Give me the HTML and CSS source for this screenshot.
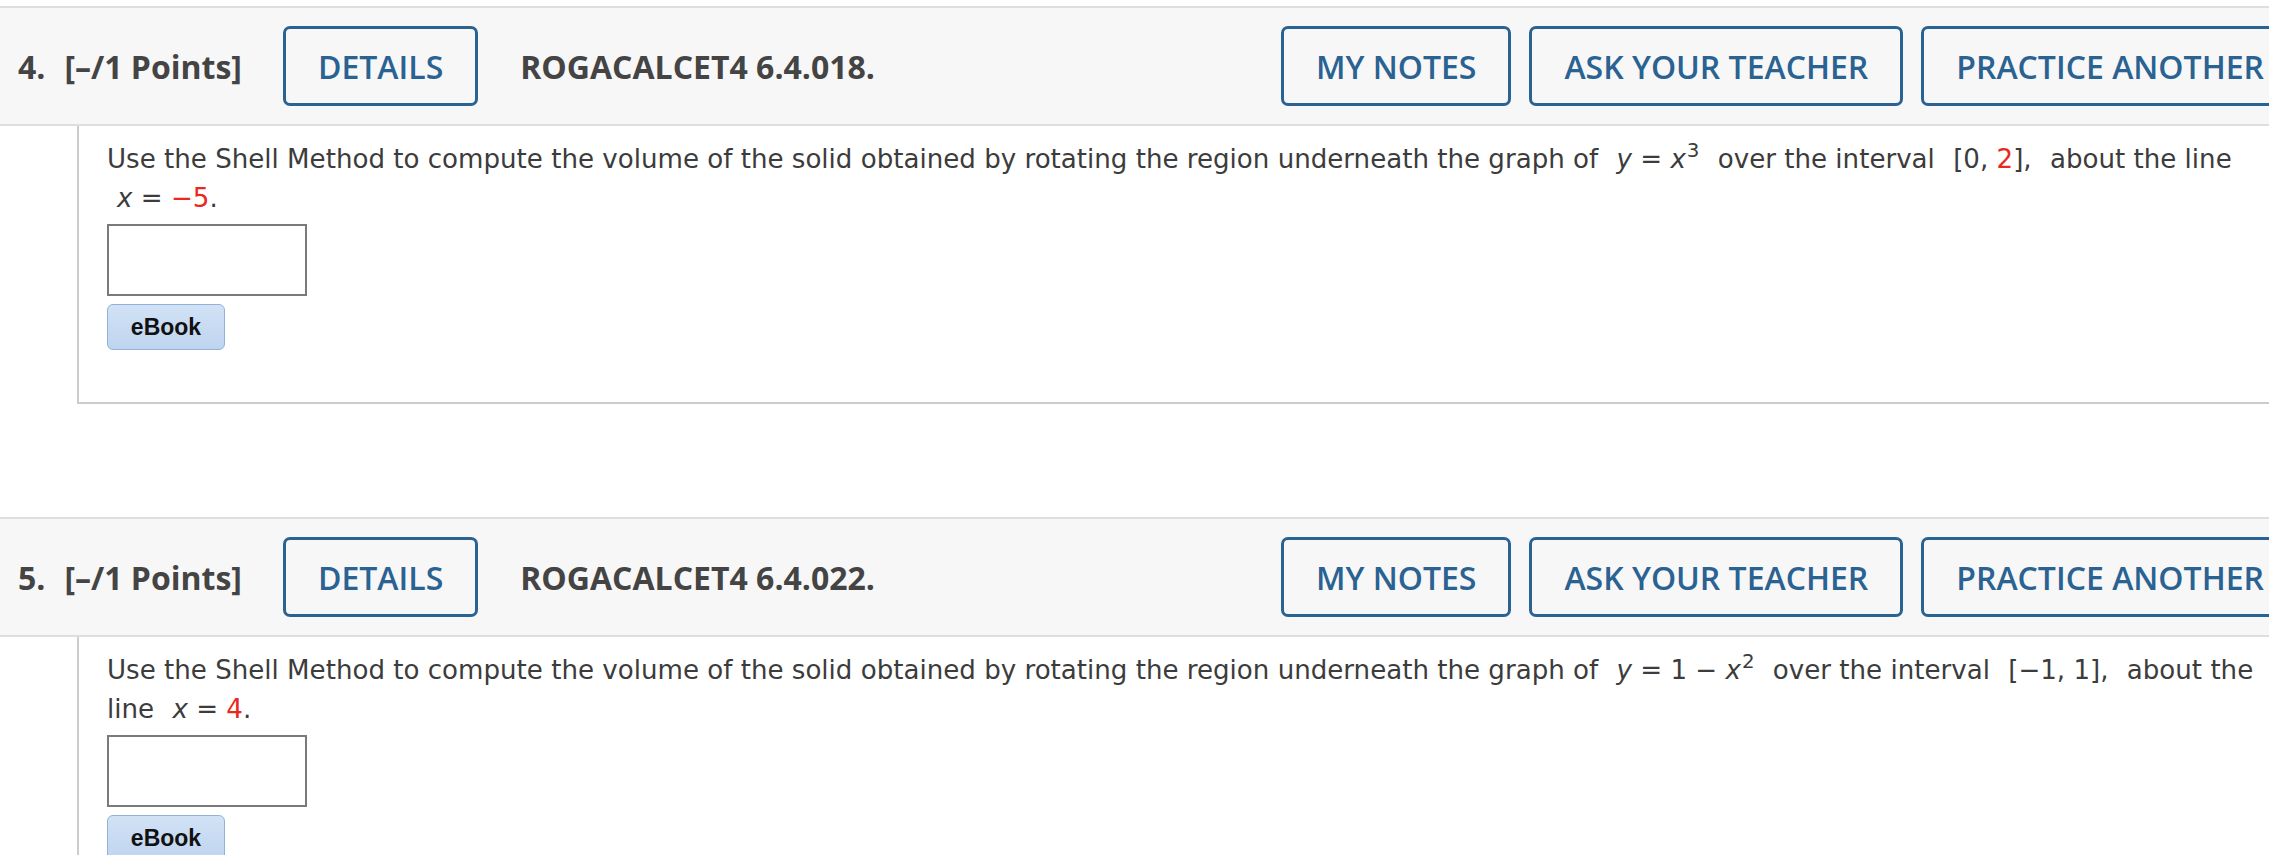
FILE: index.html
```html
<!DOCTYPE html>
<html>
<head>
<meta charset="utf-8">
<link rel="stylesheet" href="styles.css">
</head>
<body>
<div class="page">
  <section class="question first">
    <div class="qhead">
      <div class="qleft">
        <span class="qnum">4.</span>
        <span class="qpts">[–/1 Points]</span>
        <button class="btn">DETAILS</button>
        <span class="qtitle">ROGACALCET4 6.4.018.</span>
      </div>
      <div class="qright">
        <button class="btn">MY NOTES</button>
        <button class="btn">ASK YOUR TEACHER</button>
        <button class="btn">PRACTICE ANOTHER</button>
      </div>
    </div>
    <div class="qbody">
      <p class="qtext">Use the Shell Method to compute the volume of the solid obtained by rotating the region underneath the graph of <span class="math"><i>y</i> = <i>x</i><sup>3</sup></span> over the interval <span class="math">[0, <span class="red">2</span>],</span> about the line <span class="math"><i>x</i> = <span class="red">−5</span>.</span></p>
      <div class="answer"></div>
      <button class="ebook">eBook</button>
    </div>
  </section>

  <section class="question second">
    <div class="qhead">
      <div class="qleft">
        <span class="qnum">5.</span>
        <span class="qpts">[–/1 Points]</span>
        <button class="btn">DETAILS</button>
        <span class="qtitle">ROGACALCET4 6.4.022.</span>
      </div>
      <div class="qright">
        <button class="btn">MY NOTES</button>
        <button class="btn">ASK YOUR TEACHER</button>
        <button class="btn">PRACTICE ANOTHER</button>
      </div>
    </div>
    <div class="qbody">
      <p class="qtext">Use the Shell Method to compute the volume of the solid obtained by rotating the region underneath the graph of <span class="math"><i>y</i> = 1 − <i>x</i><sup>2</sup></span> over the interval <span class="math">[−1, 1],</span> about the line <span class="math"><i>x</i> = <span class="red">4</span>.</span></p>
      <div class="answer"></div>
      <button class="ebook">eBook</button>
    </div>
  </section>
</div>
</body>
</html>
```

FILE: styles.css
```css
html, body {
  margin: 0;
  padding: 0;
  background: #ffffff;
}

.page {
  width: 100%;
  overflow: hidden;
  padding-top: 6px;
}

.question.second {
  margin-top: 113px;
}

.qhead {
  width: 2320px;
  box-sizing: border-box;
  display: flex;
  align-items: center;
  background: #f7f7f7;
  border-top: 2px solid #dedede;
  border-bottom: 2px solid #dedede;
  padding: 18px 0 18px 18px;
  font-family: "Open Sans", "Liberation Sans", sans-serif;
}

.qleft {
  display: flex;
  align-items: center;
}

.qnum {
  font-size: 32px;
  font-weight: 700;
  color: #444444;
  margin-right: 19px;
}

.qpts {
  font-size: 32px;
  font-weight: 700;
  color: #444444;
  margin-right: 41px;
}

.qtitle {
  font-size: 32px;
  font-weight: 700;
  color: #444444;
  margin-left: 42px;
}

.qright {
  display: flex;
  gap: 18px;
  margin-left: 406px;
}

.btn {
  height: 80px;
  box-sizing: border-box;
  border: 3px solid #2a6292;
  border-radius: 7px;
  background: #f7f7f7;
  color: #2a6292;
  font-family: "Open Sans", "Liberation Sans", sans-serif;
  font-size: 32px;
  font-weight: 600;
  padding: 0 32px;
  margin: 0;
  white-space: nowrap;
}

.qbody {
  margin-left: 77px;
  border-left: 2px solid #cccccc;
  border-bottom: 2px solid #cccccc;
  padding: 14px 0 52px 28px;
  font-family: Verdana, "DejaVu Sans", sans-serif;
  color: #3c3c3c;
}

.qtext {
  margin: 0;
  font-size: 26.1px;
  line-height: 39px;
}

.math {
  margin: 0 10px;
  white-space: nowrap;
}

.math i {
  font-style: italic;
}

.math sup {
  font-size: 76%;
  line-height: 0;
  vertical-align: 0.55em;
  margin-left: 1px;
}

.red {
  color: #e8291c;
}

.answer {
  width: 200px;
  height: 72px;
  box-sizing: border-box;
  border: 2px solid #7a7a7a;
  background: #ffffff;
  margin-top: 6px;
}

.ebook {
  display: block;
  margin-top: 8px;
  width: 118px;
  height: 46px;
  box-sizing: border-box;
  border: 1px solid #92b1d8;
  border-radius: 6px;
  background: linear-gradient(#d2e2f6, #bed4ef);
  color: #111111;
  font-family: "Liberation Sans", Arial, sans-serif;
  font-weight: 700;
  font-size: 23px;
  padding: 0;
}
```
